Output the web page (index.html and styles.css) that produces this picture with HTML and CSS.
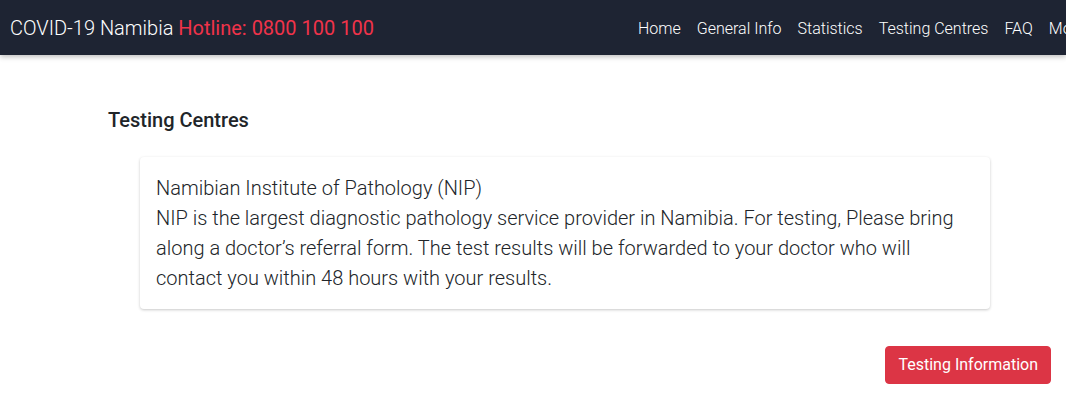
FILE: index.html
```html
<!DOCTYPE html>
<html>
<head>
<meta charset="utf-8">
<link rel="stylesheet" href="styles.css">
</head>
<body>
<nav class="navbar">
  <a class="brand">COVID-19 Namibia <span class="hotline">Hotline: 0800 100 100</span></a>
  <ul class="links">
    <li>Home</li>
    <li>General Info</li>
    <li>Statistics</li>
    <li>Testing Centres</li>
    <li>FAQ</li>
    <li>More</li>
  </ul>
</nav>
<main class="content">
  <h2 class="title">Testing Centres</h2>
  <div class="card">
    <p>Namibian Institute of Pathology (NIP)<br>NIP is the largest diagnostic pathology service provider in Namibia. For testing, Please bring along a doctor’s referral form. The test results will be forwarded to your doctor who will contact you within 48 hours with your results.</p>
  </div>
  <div class="actions">
    <button class="btn">Testing Information</button>
  </div>
</main>
</body>
</html>
```
FILE: styles.css
```css
html, body {
  margin: 0;
  padding: 0;
  background: #fff;
  overflow: hidden;
  font-family: Roboto, "Liberation Sans", sans-serif;
  color: #212529;
}
.navbar {
  height: 55px;
  background: #1e2433;
  display: flex;
  align-items: center;
  padding-left: 10px;
  box-shadow: 0 2px 5px rgba(0,0,0,0.25);
  white-space: nowrap;
  position: relative;
}
.brand {
  font-size: 20px;
  font-weight: 300;
  color: #fff;
  flex-shrink: 0;
  margin-right: 264px;
  padding-top: 1px;
}
.hotline {
  color: #f0334a;
  font-weight: 400;
}
.links {
  display: flex;
  list-style: none;
  margin: 0;
  padding: 1px 0 0 0;
  gap: 16px;
  flex-shrink: 0;
}
.links li {
  font-size: 16px;
  font-weight: 300;
  color: #ffffff;
}
.content {
  padding: 0 15px 0 108px;
}
.title {
  margin: 0;
  padding-top: 52px;
  font-size: 20px;
  font-weight: 500;
  line-height: 26px;
}
.card {
  margin: 24px 61px 0 32px;
  padding: 16px;
  border-radius: 4px;
  box-shadow: 0 1px 3px rgba(0,0,0,0.22);
  background: #fff;
}
.card p {
  margin: 0;
  font-size: 20px;
  font-weight: 300;
  line-height: 30px;
}
.actions {
  display: flex;
  justify-content: flex-end;
  margin-top: 37px;
}
.btn {
  font-family: Roboto, "Liberation Sans", sans-serif;
  font-size: 16px;
  line-height: 24px;
  padding: 6px 12px;
  color: #fff;
  background: #dc3545;
  border: 1px solid #dc3545;
  border-radius: 4px;
}
```
